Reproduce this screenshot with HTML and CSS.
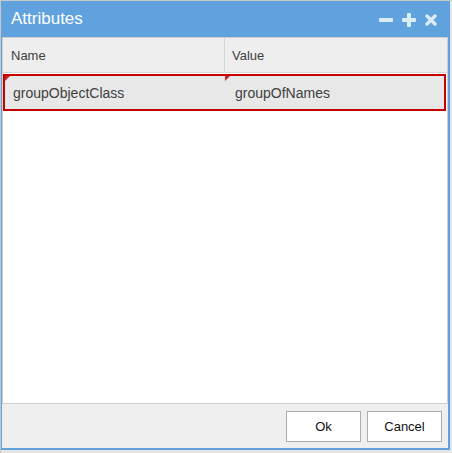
FILE: index.html
```html
<!DOCTYPE html>
<html>
<head>
<meta charset="utf-8">
<link rel="stylesheet" href="styles.css">
</head>
<body>
<div class="window">
  <div class="title-bar">
    <span class="title">Attributes</span>
    <div class="tools">
      <svg class="tool" width="14" height="14" viewBox="0 0 14 14"><rect x="0" y="5" width="14" height="4" rx="1"/></svg>
      <svg class="tool" width="14" height="14" viewBox="0 0 14 14"><rect x="0" y="5" width="14" height="4" rx="1"/><rect x="5" y="0" width="4" height="14" rx="1"/></svg>
      <svg class="tool" width="12" height="12" viewBox="0 0 12 12"><path d="M2 2 L10 10 M10 2 L2 10" stroke-width="3.4" stroke-linecap="round"/></svg>
    </div>
  </div>
  <div class="body">
    <div class="grid">
      <div class="grid-head">
        <div class="hcell col1">Name</div>
        <div class="hcell col2">Value</div>
      </div>
      <div class="grid-row">
        <div class="cell col1"><span class="dirty"></span>groupObjectClass</div>
        <div class="cell col2"><span class="dirty"></span>groupOfNames</div>
      </div>
    </div>
    <div class="footer">
      <button class="btn">Ok</button>
      <button class="btn">Cancel</button>
    </div>
  </div>
</div>
</body>
</html>
```

FILE: styles.css
```css
html, body {
  margin: 0;
  padding: 0;
}
body {
  background: #e4e4e4;
  width: 452px;
  height: 453px;
  font-family: "Liberation Sans", Arial, sans-serif;
  border-top: 1px solid #c8c8c8;
  border-left: 1px solid #c8c8c8;
  box-sizing: border-box;
}
.window {
  width: 449px;
  height: 449px;
  box-sizing: border-box;
  background: #5fa2dd;
  border: 1px solid #5fa2dd;
  border-right-width: 2px;
  border-bottom-width: 2px;
  display: flex;
  flex-direction: column;
}
.title-bar {
  height: 35px;
  flex: none;
  display: flex;
  align-items: center;
  justify-content: space-between;
  padding: 0 11px 0 9px;
  color: #fff;
}
.title {
  font-size: 17px;
  line-height: 20px;
  margin-top: -1px;
}
.tools {
  display: flex;
  align-items: center;
  gap: 9px;
}
.tool {
  fill: #dcebf8;
  stroke: #dcebf8;
}
.tool rect { stroke: none; }
.body {
  flex: 1;
  background: #efefef;
  display: flex;
  flex-direction: column;
}
.grid {
  flex: 1;
  background: #fff;
  border: 1px solid #cfcfcf;
  display: flex;
  flex-direction: column;
}
.grid-head {
  height: 34px;
  flex: none;
  display: flex;
  background: #eeeeee;
  border-bottom: 1px solid #d6d6d6;
  color: #404040;
  font-size: 13px;
}
.hcell {
  display: flex;
  align-items: center;
  padding-left: 8px;
  padding-top: 1px;
}
.hcell.col1 {
  width: 213px;
  border-right: 1px solid #d6d6d6;
}
.hcell.col2 {
  flex: 1;
  padding-left: 7px;
}
.grid-row {
  margin-top: 1px;
  height: 37px;
  box-sizing: border-box;
  border: 2px solid #c70000;
  background: #e8e8e8;
  display: flex;
  color: #404040;
  font-size: 14px;
  margin-right: 1px;
}
.cell {
  position: relative;
  display: flex;
  align-items: center;
  padding-left: 8px;
  padding-top: 1px;
}
.cell.col1 { width: 212px; }
.cell.col2 { flex: 1; padding-left: 10px; }
.dirty {
  position: absolute;
  left: 0;
  top: 0;
  width: 0;
  height: 0;
  border-top: 5px solid #c1272d;
  border-right: 5px solid transparent;
}
.footer {
  height: 44px;
  flex: none;
  display: flex;
  justify-content: flex-end;
  align-items: center;
  gap: 6px;
  padding-right: 6px;
  padding-top: 1px;
  box-sizing: border-box;
}
.btn {
  width: 75px;
  height: 31px;
  background: #fff;
  border: 1px solid #adadad;
  font-family: "Liberation Sans", Arial, sans-serif;
  font-size: 13px;
  color: #111;
  padding: 0;
  margin: 0;
}
```
